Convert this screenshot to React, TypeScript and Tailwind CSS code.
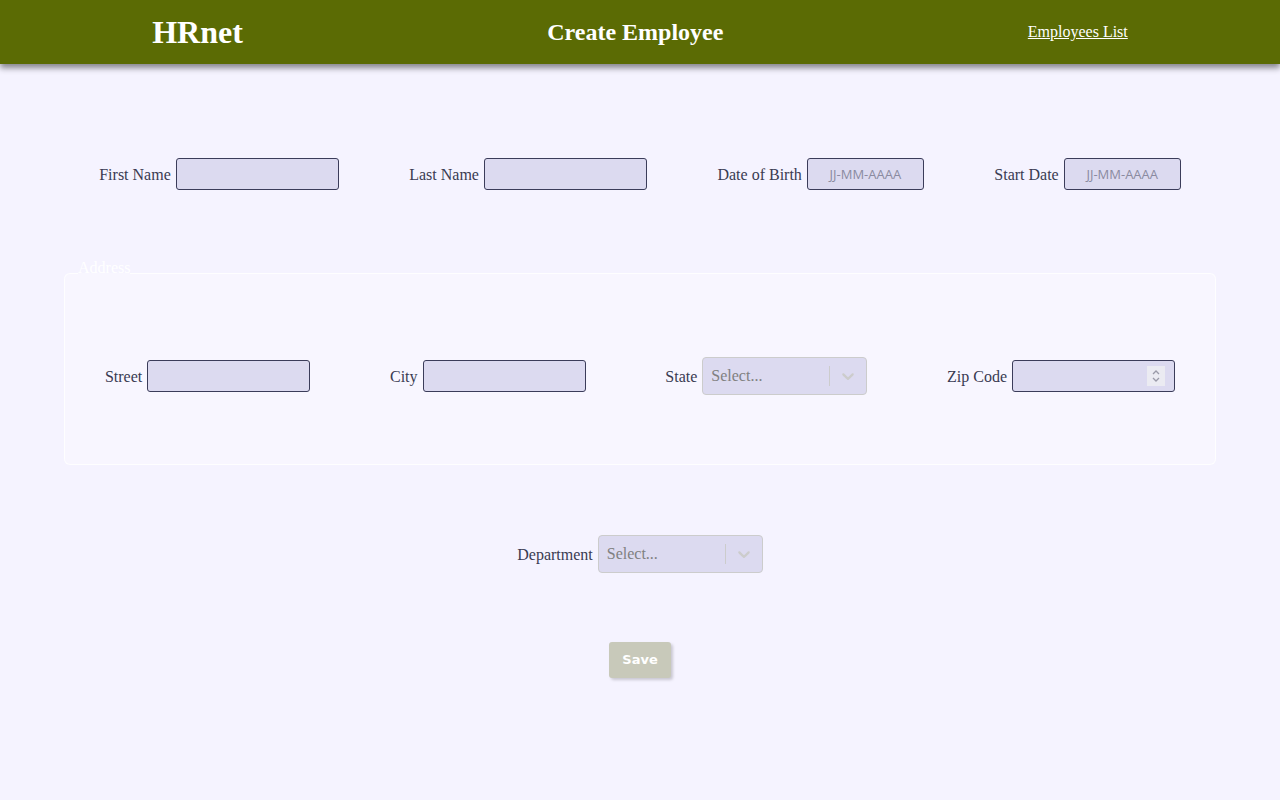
const inputCls =
  "w-[163px] h-[32px] border border-[#3b3c5a] rounded-[3px] bg-[#dcdaf0] outline-none px-1 text-[16px]";

const dateCls =
  "w-[117px] h-[32px] border border-[#3b3c5a] rounded-[3px] bg-[#dcdaf0] outline-none text-center text-[13px] font-['Open_Sans',sans-serif] placeholder:text-[#8a8aa0]";

function Chevron() {
  return (
    <svg viewBox="0 0 20 20" className="w-5 h-5 fill-[#cccccc]">
      <path d="M4.516 7.548c0.436-0.446 1.043-0.481 1.576 0l3.908 3.747 3.908-3.747c0.533-0.481 1.141-0.446 1.574 0 0.436 0.445 0.408 1.197 0 1.615-0.406 0.418-4.695 4.502-4.695 4.502-0.217 0.223-0.502 0.335-0.787 0.335s-0.57-0.112-0.789-0.335c0 0-4.287-4.084-4.695-4.502s-0.436-1.17 0-1.615z" />
    </svg>
  );
}

function Select() {
  return (
    <div className="flex items-center w-[165px] h-[38px] border border-[#cccccc] rounded-[4px] bg-[#dcdaf0]">
      <div className="flex-1 px-2 text-[#808080]">Select...</div>
      <span className="w-px h-5 bg-[#cccccc]" />
      <div className="p-2">
        <Chevron />
      </div>
    </div>
  );
}

function Field({ label, children }: { label: string; children: React.ReactNode }) {
  return (
    <div className="flex items-center gap-[5px]">
      <label className="pt-[2px]">{label}</label>
      {children}
    </div>
  );
}

export default function App() {
  return (
    <div className="min-h-screen bg-[#f5f3ff] text-[#3a3b52] text-[16px] font-['Liberation_Serif',serif]">
      <header className="h-16 flex justify-around items-center bg-[#5b6b04] text-white shadow-[0_4px_6px_rgba(0,0,0,0.45)]">
        <h1 className="text-[32px] font-bold">HRnet</h1>
        <h2 className="text-[24px] font-bold">Create Employee</h2>
        <a className="underline text-[16px]">Employees List</a>
      </header>

      <form className="mx-16">
        <div className="flex justify-around items-center mt-[94px]">
          <Field label="First Name">
            <input className={inputCls} type="text" />
          </Field>
          <Field label="Last Name">
            <input className={inputCls} type="text" />
          </Field>
          <Field label="Date of Birth">
            <input className={dateCls} placeholder="JJ-MM-AAAA" type="text" />
          </Field>
          <Field label="Start Date">
            <input className={dateCls} placeholder="JJ-MM-AAAA" type="text" />
          </Field>
        </div>

        <fieldset className="mt-[70px] border border-white/80 rounded-[6px] bg-white/30">
          <legend className="ml-[13px] leading-none pb-[11px] text-white">Address</legend>
          <div className="flex justify-around items-center pt-[70px] pb-[69px]">
            <Field label="Street">
              <input className={inputCls} type="text" />
            </Field>
            <Field label="City">
              <input className={inputCls} type="text" />
            </Field>
            <Field label="State">
              <Select />
            </Field>
            <Field label="Zip Code">
              <div className="relative">
                <input className={inputCls} type="text" />
                <div className="absolute right-[10px] top-[6px] w-[18px] h-[20px] bg-[#ebebf2] flex flex-col items-center justify-center">
                  <svg viewBox="0 0 10 14" className="w-[10px] h-[14px] stroke-[#9a9aa8] fill-none" strokeWidth="1.3">
                    <path d="M2 5l3-3 3 3" />
                    <path d="M2 9l3 3 3-3" />
                  </svg>
                </div>
              </div>
            </Field>
          </div>
        </fieldset>

        <div className="flex justify-center mt-[70px]">
          <Field label="Department">
            <Select />
          </Field>
        </div>

        <div className="flex justify-center mt-[69px]">
          <button
            type="button"
            className="h-[36px] px-[13px] rounded-[3px] bg-[#c8c9ba] text-white text-[13px] font-bold font-['DejaVu_Sans',sans-serif] shadow-[2px_2px_3px_rgba(0,0,0,0.18)]"
          >
            Save
          </button>
        </div>
      </form>
    </div>
  );
}
